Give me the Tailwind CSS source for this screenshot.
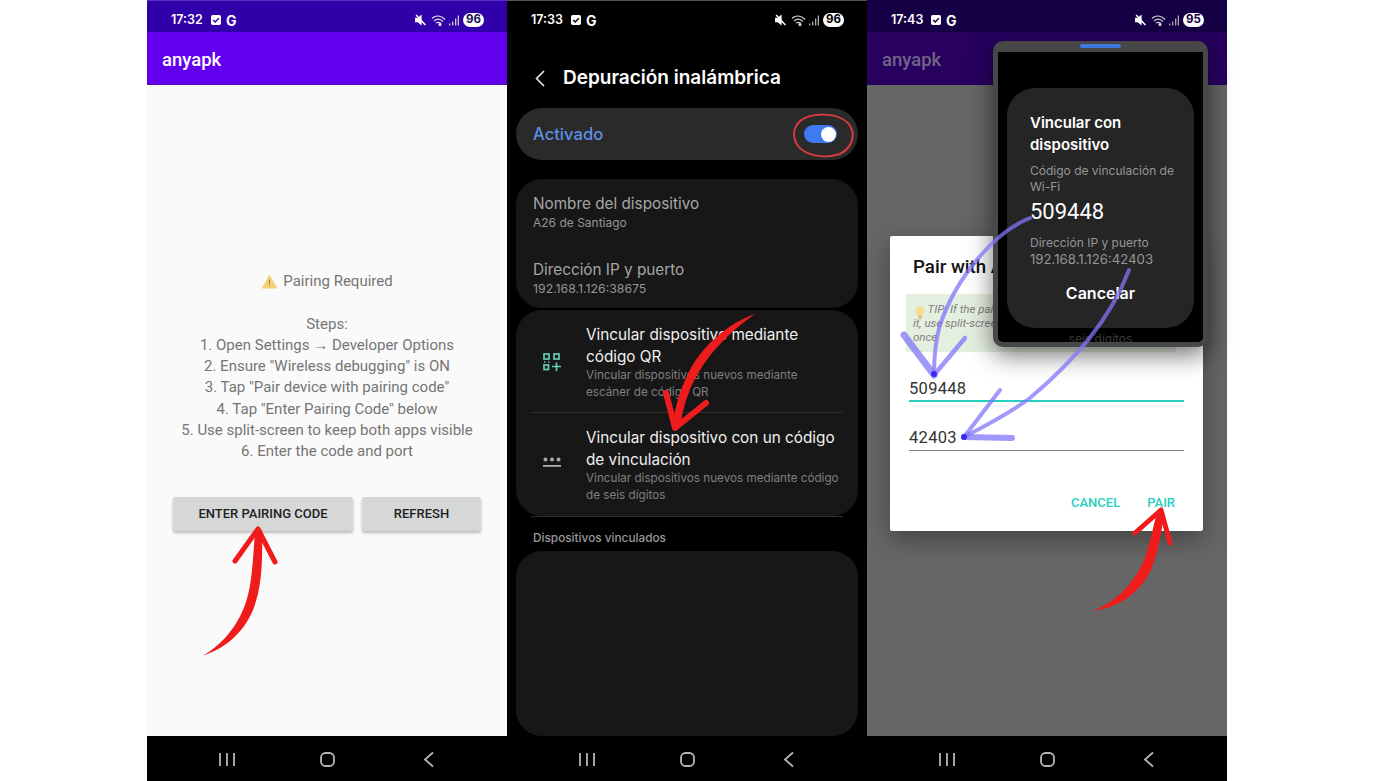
<!DOCTYPE html>
<html lang="en">

<head>
    <meta charset="UTF-8">
    <meta name="viewport" content="width=device-width, initial-scale=1.0">
    <title>Wireless debugging pairing</title>
    <script src="https://cdn.jsdelivr.net/npm/@tailwindcss/browser@4"></script>
</head>

<body class="bg-white">
    <div class="relative w-[1388px] h-[781px] overflow-hidden flex pl-[147px] font-['Roboto',sans-serif]">

        <!-- Phone 1: app -->
        <div class="relative w-[360px] h-[781px] flex flex-col bg-[#fafafa]">
            <div class="h-[32px] shrink-0 bg-[#3000a8] border-t border-[#5a30c4] pt-[7px] flex items-center justify-between pl-[24px] pr-[23px] text-white font-['Inter',sans-serif]">
                <div class="flex items-center">
                    <span class="text-[12.5px] font-semibold w-[40px]">17:32</span>
                    <svg width="10" height="10" viewBox="0 0 9 9"><rect width="9" height="9" rx="1.5" fill="#fff"/><path d="M2 4.500l1.800 1.800L7 3" fill="none" stroke="#3000a8" stroke-width="1.300"/></svg>
                    <span class="text-[14px] font-bold ml-[5px]">G</span>
                </div>
                <div class="flex items-center">
                    <svg width="11" height="12" viewBox="0 0 10 11"><path d="M0 3.500h2.500L6 .5v10L2.500 7.500H0z" fill="#fff"/><path d="M1 1l8.500 9" stroke="#fff" stroke-width="1.400"/></svg>
                    <svg class="ml-[5px]" width="15" height="11" viewBox="0 0 15 11" fill="none" stroke="#ddd" stroke-width="1.200"><path d="M1 3.500C5 0 10 .5 14 4.500M3 6C6 3.500 9 3.500 12 6.500M5 8c2-1.200 3.500-1 5 .5"/><circle cx="9" cy="9.500" r="1" fill="#fff"/></svg>
                    <svg class="ml-[3px]" width="10" height="11" viewBox="0 0 10 10" fill="#ccc"><rect x="0" y="8" width="1.300" height="2"/><rect x="3" y="6" width="1.300" height="4"/><rect x="6" y="3" width="1.300" height="7"/><rect x="8.700" y="0" width="1.300" height="10"/></svg>
                    <span class="ml-[4px] w-[21px] h-[14px] rounded-full bg-white text-[#1a0f5c] text-[11.5px] font-bold flex items-center justify-center">96</span>
                </div>
            </div>
            <div class="h-[53px] shrink-0 bg-[#6200ee] border-b border-[#4a10b0] pt-[5px] flex items-center pl-[15px] text-white text-[18.5px] font-medium">anyapk</div>
            <div class="flex-1 flex flex-col items-center pt-[186px]">
                <div class="text-[#757575] text-[15px] leading-[21.3px] text-center">
                    <div class="flex items-center justify-center">
                        <svg class="mr-[5px]" width="17" height="15" viewBox="0 0 16 14"><path d="M8 .5L15.500 13.500H.5z" fill="#f3d27a"/><path d="M8 5v4.500M8 10.800v1" stroke="#9a7a3a" stroke-width="1"/></svg>
                        Pairing Required
                    </div>
                    <div class="h-[21.300px]"></div>
                    <div>Steps:</div>
                    <div>1. Open Settings → Developer Options</div>
                    <div>2. Ensure "Wireless debugging" is ON</div>
                    <div>3. Tap "Pair device with pairing code"</div>
                    <div>4. Tap "Enter Pairing Code" below</div>
                    <div>5. Use split-screen to keep both apps visible</div>
                    <div>6. Enter the code and port</div>
                </div>
                <div class="flex gap-[9px] mt-[34px] text-[#222] text-[13px] font-medium">
                    <button class="w-[180px] h-[34px] pt-px bg-[#d6d7d7] rounded-[2px] shadow-[0_2px_3px_rgba(0,0,0,0.25)]">ENTER PAIRING CODE</button>
                    <button class="w-[119px] h-[34px] pt-px bg-[#d6d7d7] rounded-[2px] shadow-[0_2px_3px_rgba(0,0,0,0.25)]">REFRESH</button>
                </div>
            </div>
            <div class="h-[45px] shrink-0 bg-black relative">
                <svg class="absolute left-[70px] top-[15px]" width="220" height="17" viewBox="0 0 220 17" fill="none" stroke="#b5b5b5" stroke-width="1.800"><path d="M3 2v13M10 2v13M17 2v13"/><rect x="104" y="2" width="13" height="13" rx="4.500"/><path d="M216 1.500l-8 7 8 7"/></svg>
            </div>
        </div>

        <!-- Phone 2: wireless debugging settings -->
        <div class="relative w-[360px] h-[781px] flex flex-col bg-black font-['Inter',sans-serif] border-t border-[#555]">
            <div class="h-[31px] shrink-0 pt-[7px] flex items-center justify-between pl-[24px] pr-[23px] text-white">
                <div class="flex items-center">
                    <span class="text-[12.5px] font-semibold w-[40px]">17:33</span>
                    <svg width="10" height="10" viewBox="0 0 9 9"><rect width="9" height="9" rx="1.5" fill="#fff"/><path d="M2 4.500l1.800 1.800L7 3" fill="none" stroke="#000" stroke-width="1.300"/></svg>
                    <span class="text-[14px] font-bold ml-[5px]">G</span>
                </div>
                <div class="flex items-center">
                    <svg width="11" height="12" viewBox="0 0 10 11"><path d="M0 3.500h2.500L6 .5v10L2.500 7.500H0z" fill="#fff"/><path d="M1 1l8.500 9" stroke="#fff" stroke-width="1.400"/></svg>
                    <svg class="ml-[5px]" width="15" height="11" viewBox="0 0 15 11" fill="none" stroke="#ccc" stroke-width="1.200"><path d="M1 3.500C5 0 10 .5 14 4.500M3 6C6 3.500 9 3.500 12 6.500M5 8c2-1.200 3.500-1 5 .5"/><circle cx="9" cy="9.500" r="1" fill="#fff"/></svg>
                    <svg class="ml-[3px]" width="10" height="11" viewBox="0 0 10 10" fill="#aaa"><rect x="0" y="8" width="1.300" height="2"/><rect x="3" y="6" width="1.300" height="4"/><rect x="6" y="3" width="1.300" height="7"/><rect x="8.700" y="0" width="1.300" height="10"/></svg>
                    <span class="ml-[4px] w-[21px] h-[14px] rounded-full bg-white text-black text-[11.5px] font-bold flex items-center justify-center">96</span>
                </div>
            </div>
            <div class="h-[76px] shrink-0 pt-[17px] flex items-center pl-[28px]">
                <svg width="10" height="17" viewBox="0 0 10 17" fill="none" stroke="#e8e8e8" stroke-width="1.600"><path d="M9 1L1.500 8.500 9 16"/></svg>
                <span class="ml-[18px] text-white text-[19px] font-semibold">Depuración inalámbrica</span>
            </div>
            <div class="mx-[9px] h-[52px] shrink-0 rounded-full bg-[#2a2a2a] flex items-center justify-between pl-[17px] pr-[21px]">
                <span class="text-[#5f8fe8] text-[16.600px] font-medium">Activado</span>
                <span class="w-[33px] h-[18px] rounded-full bg-[#3e7bf0] flex items-center justify-end pr-[1.500px]">
                    <span class="w-[15px] h-[15px] rounded-full bg-white"></span>
                </span>
            </div>
            <div class="mx-[9px] mt-[19px] h-[129px] shrink-0 rounded-[26px] bg-[#171717] pl-[17px] pt-[15px]">
                <div class="text-[#a6a6a6] text-[15.300px] leading-[20px]">Nombre del dispositivo</div>
                <div class="text-[#959595] text-[12px] leading-[18px]">A26 de Santiago</div>
                <div class="text-[#a6a6a6] text-[15.300px] leading-[20px] mt-[28px]">Dirección IP y puerto</div>
                <div class="text-[#959595] text-[12.300px] leading-[18px]">192.168.1.126:38675</div>
            </div>
            <div class="mx-[9px] mt-[2px] h-[206px] shrink-0 rounded-[26px] bg-[#171717] flex flex-col">
                <div class="h-[103px] shrink-0 flex border-b border-[#2e2e2e] mx-[15px]">
                    <svg class="ml-[12px] mt-[43px] shrink-0" width="18" height="18" viewBox="0 0 18 18" fill="none" stroke="#62cdb6" stroke-width="1.700"><rect x="1" y="1" width="5" height="5"/><rect x="11" y="1" width="5" height="5"/><rect x="1" y="12" width="4.500" height="4.500"/><path d="M9 13.500H18M13.500 9.500V18M1 9h1.500M5 9h1.500" /></svg>
                    <div class="ml-[25px] pt-[14px] whitespace-nowrap">
                        <div class="text-[#f0f0f0] text-[15.300px] leading-[21.500px]">Vincular dispositivo mediante<br>código QR</div>
                        <div class="text-[#7f7f7f] text-[11.700px] leading-[17px]">Vincular dispositivos nuevos mediante<br>escáner de código QR</div>
                    </div>
                </div>
                <div class="flex mx-[15px]">
                    <svg class="ml-[12px] mt-[44px] shrink-0" width="18" height="12" viewBox="0 0 18 12" fill="#aaa"><circle cx="2.500" cy="2.500" r="2"/><circle cx="9" cy="2.500" r="2"/><circle cx="15.500" cy="2.500" r="2"/><rect x="0" y="8" width="18" height="1.800"/></svg>
                    <div class="ml-[25px] pt-[14px] whitespace-nowrap">
                        <div class="text-[#f0f0f0] text-[15.300px] leading-[21.500px]">Vincular dispositivo con un código<br>de vinculación</div>
                        <div class="text-[#7f7f7f] text-[11.700px] leading-[17px]">Vincular dispositivos nuevos mediante código<br>de seis dígitos</div>
                    </div>
                </div>
            </div>
            <div class="mx-[24px] h-px shrink-0 bg-[#2e2e2e]"></div>
            <div class="h-[34px] shrink-0 pl-[26px] pt-[13px] text-[#9a9a9a] text-[11.800px] leading-[16px] font-medium">Dispositivos vinculados</div>
            <div class="mx-[9px] flex-1 rounded-[26px] bg-[#171717]"></div>
            <div class="h-[45px] shrink-0 bg-black relative">
                <svg class="absolute left-[70px] top-[15px]" width="220" height="17" viewBox="0 0 220 17" fill="none" stroke="#b5b5b5" stroke-width="1.800"><path d="M3 2v13M10 2v13M17 2v13"/><rect x="104" y="2" width="13" height="13" rx="4.500"/><path d="M216 1.500l-8 7 8 7"/></svg>
            </div>
        </div>

        <!-- Phone 3: dimmed app with dialog and floating window -->
        <div class="relative w-[360px] h-[781px] flex flex-col bg-[#666666]">
            <div class="h-[32px] shrink-0 pt-[8px] bg-[#160045] flex items-center justify-between pl-[24px] pr-[23px] text-white font-['Inter',sans-serif]">
                <div class="flex items-center">
                    <span class="text-[12.5px] font-semibold w-[40px]">17:43</span>
                    <svg width="10" height="10" viewBox="0 0 9 9"><rect width="9" height="9" rx="1.5" fill="#fff"/><path d="M2 4.500l1.800 1.800L7 3" fill="none" stroke="#160045" stroke-width="1.300"/></svg>
                    <span class="text-[14px] font-bold ml-[5px]">G</span>
                </div>
                <div class="flex items-center">
                    <svg width="11" height="12" viewBox="0 0 10 11"><path d="M0 3.500h2.500L6 .5v10L2.500 7.500H0z" fill="#fff"/><path d="M1 1l8.500 9" stroke="#fff" stroke-width="1.400"/></svg>
                    <svg class="ml-[5px]" width="15" height="11" viewBox="0 0 15 11" fill="none" stroke="#ccc" stroke-width="1.200"><path d="M1 3.500C5 0 10 .5 14 4.500M3 6C6 3.500 9 3.500 12 6.500M5 8c2-1.200 3.500-1 5 .5"/><circle cx="9" cy="9.500" r="1" fill="#fff"/></svg>
                    <svg class="ml-[3px]" width="10" height="11" viewBox="0 0 10 10" fill="#aaa"><rect x="0" y="8" width="1.300" height="2"/><rect x="3" y="6" width="1.300" height="4"/><rect x="6" y="3" width="1.300" height="7"/><rect x="8.700" y="0" width="1.300" height="10"/></svg>
                    <span class="ml-[4px] w-[21px] h-[14px] rounded-full bg-white text-[#160045] text-[11.5px] font-bold flex items-center justify-center">95</span>
                </div>
            </div>
            <div class="h-[53px] shrink-0 pt-[5px] bg-[#270060] flex items-center pl-[15px] text-[#6f6584] text-[18.5px] font-medium">anyapk</div>
            <div class="flex-1"></div>
            <div class="h-[45px] shrink-0 bg-black relative">
                <svg class="absolute left-[70px] top-[15px]" width="220" height="17" viewBox="0 0 220 17" fill="none" stroke="#b5b5b5" stroke-width="1.800"><path d="M3 2v13M10 2v13M17 2v13"/><rect x="104" y="2" width="13" height="13" rx="4.500"/><path d="M216 1.500l-8 7 8 7"/></svg>
            </div>

            <!-- Pair dialog -->
            <div class="absolute left-[23px] top-[236px] w-[313px] h-[295px] bg-white rounded-[2px] shadow-[0_8px_24px_rgba(0,0,0,0.35)]">
                <div class="absolute left-[23px] top-[19px] text-[#111] text-[18.700px] leading-[24px] font-medium">Pair with ADB</div>
                <div class="absolute left-[16px] top-[58px] w-[270px] h-[58px] bg-[#e4efdf] pl-[7px] pt-[8px] text-[#808080] text-[11.500px] leading-[14px] italic">
                    <span class="inline-block w-[12px]"></span> TIP: If the pairing code changes<br>it, use split-screen to keep both<br>once
                </div>
                <div class="absolute left-[19px] right-[19px] top-[142px] h-[24px] border-b-2 border-[#26cfc0] text-[#333] text-[16.500px] leading-[22px] tracking-[0.3px]">509448</div>
                <div class="absolute left-[19px] right-[19px] top-[191px] h-[24px] border-b border-[#888] text-[#333] text-[16.500px] leading-[22px] tracking-[0.3px]">42403</div>
                <div class="absolute right-[28px] top-[259px] flex gap-[27px] text-[#2ad0c0] text-[13px] leading-[16px] font-medium">
                    <span>CANCEL</span><span>PAIR</span>
                </div>
            </div>

            <!-- Floating settings window -->
            <div class="absolute left-[126px] top-[41px] w-[215px] h-[306px] rounded-[10px] border-[5px] border-t-[11px] border-[#474747] bg-black shadow-[0_8px_24px_rgba(0,0,0,0.55)] overflow-hidden font-['Inter',sans-serif]">
                <div class="absolute left-[9px] right-[9px] top-[36px] h-[240px] rounded-[28px] bg-[#252525] pl-[23px] pt-[24px]">
                    <div class="text-white text-[15px] leading-[21.500px] font-semibold">Vincular con<br>dispositivo</div>
                    <div class="text-[#969696] text-[12px] leading-[15.500px] mt-[8px]">Código de vinculación de<br>Wi-Fi</div>
                    <div class="text-white text-[22px] leading-[26px] font-['Roboto',sans-serif] mt-[5px]">509448</div>
                    <div class="text-[#969696] text-[12px] leading-[17px] mt-[9px]">Dirección IP y puerto</div>
                    <div class="text-[#969696] text-[13.200px] leading-[17px]">192.168.1.126:42403</div>
                    <div class="absolute left-0 right-0 top-[194px] text-center text-white text-[16px] leading-[22px] font-semibold">Cancelar</div>
                </div>
                <div class="absolute left-0 right-0 top-[279px] text-center text-[#3a3a3a] text-[12px] leading-[15px]">seis dígitos</div>
            </div>
            <div class="absolute left-[213px] top-[44px] w-[41px] h-[4px] rounded-[2px] bg-[#3b78e0]"></div>
        </div>

        <!-- Hand drawn annotations -->
        <svg class="absolute left-0 top-0 pointer-events-none" width="1388" height="781" viewBox="0 0 1388 781" fill="none">
            <path d="M800 121C812 112 838 112 849 124C856 134 853 147 840 154C825 159 806 156 798 146C792 137 793 128 800 121Z" stroke="#d63b3f" stroke-width="2"/>
            <!-- bulb on the tip box -->
            <circle cx="920" cy="311" r="4.500" fill="#f5dd8a"/><rect x="918" y="315" width="4" height="4" fill="#d9c98f"/>
            <!-- red arrows -->
            <path d="M203 655.500C222 645 238 626 246 602C252 584 253 560 255 530L262 530C263 565 261 590 253 610C244 632 225 649 203 655.500Z" fill="#f01c1c"/>
            <path d="M235 561L258 529L275 562" stroke="#f01c1c" stroke-width="5" stroke-linecap="round" stroke-linejoin="round"/>
            <path d="M755 314C732 322 708 340 692 366C682 384 675 405 672 428L680 428C683 405 690 386 700 370C715 346 735 328 755 314Z" fill="#ee1c1c"/>
            <path d="M666 393L675 428L706 403" stroke="#ee1c1c" stroke-width="6" stroke-linecap="round" stroke-linejoin="round"/>
            <path d="M1092 611C1115 603 1132 585 1143 563C1149 548 1152 532 1157 512L1164 513C1161 538 1157 556 1150 572C1138 594 1118 608 1092 611Z" fill="#f01c1c"/>
            <path d="M1135 533L1161 510L1170 543" stroke="#f01c1c" stroke-width="5" stroke-linecap="round" stroke-linejoin="round"/>
            <!-- purple arrows -->
            <g stroke="#8075f8" stroke-opacity="0.75" stroke-linecap="round">
                <path d="M1030 218C994 232 956 278 940 325C935 342 934 358 934 375" stroke-width="4"/>
                <path d="M904 335L934 375" stroke-width="7"/>
                <path d="M965 338L934 375" stroke-width="4.500"/>
                <path d="M1129 270C1110 320 1075 360 1030 398C1010 413 985 426 964 437" stroke-width="4"/>
                <path d="M1000 390L964 437" stroke-width="4"/>
                <path d="M964 437L1012 438" stroke-width="6"/>
            </g>
            <circle cx="934" cy="374" r="3" fill="#3a2af0"/>
            <circle cx="964" cy="437" r="3" fill="#3a2af0"/>
        </svg>
    </div>
</body>

</html>
